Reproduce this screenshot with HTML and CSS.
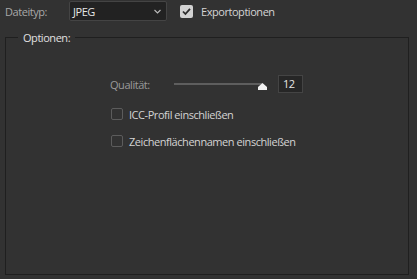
FILE: index.html
```html
<!DOCTYPE html>
<html lang="de">
<head>
<meta charset="utf-8">
<link rel="stylesheet" href="styles.css">
</head>
<body>
<div class="top">
  <span class="lbl">Dateityp:</span>
  <div class="select">
    <span>JPEG</span>
    <svg class="chev" width="7" height="5" viewBox="0 0 7 5"><path d="M0.5 1 L3.5 4 L6.5 1" fill="none" stroke="#bbb" stroke-width="1.1"/></svg>
  </div>
  <span class="cb on"><svg width="13" height="13" viewBox="0 0 13 13"><path d="M3 6.5 L5.4 9 L10 3.8" fill="none" stroke="#2b2b2b" stroke-width="1.8"/></svg></span>
  <span class="txt">Exportoptionen</span>
</div>
<fieldset class="group">
  <legend>Optionen:</legend>
  <div class="quality">
    <span class="qlbl">Qualität:</span>
    <div class="slider">
      <div class="track"></div>
      <svg class="thumb" width="9" height="7" viewBox="0 0 9 7"><path d="M0 7 L0 4 L4.5 0 L9 4 L9 7 Z" fill="#f2f2f2"/></svg>
    </div>
    <div class="num">12</div>
  </div>
  <div class="row"><span class="cb"></span><span class="txt">ICC-Profil einschließen</span></div>
  <div class="row"><span class="cb"></span><span class="txt">Zeichenflächennamen einschließen</span></div>
</fieldset>
</body>
</html>
```
FILE: styles.css
```css
html, body { margin: 0; padding: 0; }
body {
  width: 417px; height: 279px; overflow: hidden;
  background: #323232;
  font-family: "Open Sans", "Noto Sans", sans-serif;
  font-size: 11px;
  letter-spacing: -0.45px;
  color: #d4d4d4;
}
.top {
  display: flex; align-items: center;
  height: 22px;
  padding-left: 5px;
}
.lbl { width: 64px; color: #a8a8a8; }
.select {
  box-sizing: border-box;
  width: 98px; height: 20px;
  background: #222;
  border: 1px solid #444;
  border-radius: 2px;
  display: flex; align-items: center; justify-content: space-between;
  padding: 0 5px 0 3px;
  color: #e6e6e6;
}
.chev { display: block; }
.cb {
  box-sizing: border-box;
  width: 12px; height: 12px;
  border: 1px solid #5c5c5c;
  border-radius: 2px;
  flex: none;
}
.top .cb {
  width: 13px; height: 13px;
  margin-left: 13px;
  border: none;
  background: #d2d2d2;
}
.cb svg { display: block; }
.top .txt { margin-left: 8px; }
.group {
  margin: 8px 8px 0 5px;
  height: 245px;
  box-sizing: border-box;
  border: 1px solid #1f1f1f;
  padding: 0 0 0 12px;
  min-width: 0;
}
.group legend { padding: 0 5px; color: #e0e0e0; }
.quality {
  display: flex; align-items: center;
  margin-top: 30px;
  margin-left: 92px;
  height: 18px;
}
.qlbl { width: 64px; color: #9a9a9a; }
.slider { position: relative; width: 92px; height: 18px; }
.track {
  position: absolute; left: 0; top: 8px;
  width: 88px; height: 2px;
  background: #5e5e5e;
}
.thumb { position: absolute; left: 84px; top: 8px; }
.num {
  box-sizing: border-box;
  margin-left: 12px;
  width: 25px; height: 18px;
  background: #262626;
  border: 1px solid #444;
  padding-left: 4px;
  line-height: 16px;
  color: #e6e6e6;
}
.row {
  display: flex; align-items: center;
  margin-left: 93px;
  height: 12px;
  margin-top: 15px;
}
.row + .row { margin-top: 15px; }
.row .txt { margin-left: 6px; }
```
